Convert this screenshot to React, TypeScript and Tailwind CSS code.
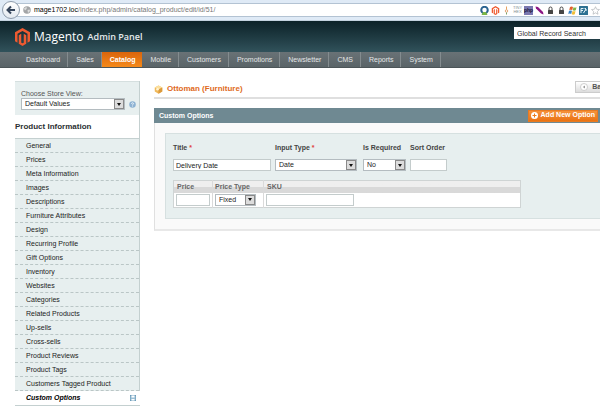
import React from "react";

const NAV_ITEMS = [
    "Dashboard", "Sales", "Catalog", "Mobile", "Customers",
    "Promotions", "Newsletter", "CMS", "Reports", "System"
];

const PRODUCT_TABS = [
    "General", "Prices", "Meta Information", "Images", "Descriptions", "Furniture Attributes",
    "Design", "Recurring Profile", "Gift Options", "Inventory", "Websites", "Categories",
    "Related Products", "Up-sells", "Cross-sells", "Product Reviews", "Product Tags",
    "Customers Tagged Product", "Custom Options"
];

/**
 * The Magento hexagon
 */
const MagentoMark: React.FC<{ className: string }> = ({ className }) => (
    <svg className={className} viewBox="0 0 30 36" fill="#ee5a30" aria-hidden="true">
        <path d="M15 0 30 8.700V26.500L25 29.400V11.600L15 5.800 5 11.600V29.400L0 26.500V8.700z" />
        <path d="M7.500 14.600 12.500 11.700V29.300L15 30.600 17.500 29.300V11.700L22.500 14.600V31.600L15 36 7.500 31.600z" />
    </svg>
);

/**
 * SelectBoxProps
 */
interface SelectBoxProps {
    id: string
    options: string[]
    className: string
    label?: string
}

const SelectBox: React.FC<SelectBoxProps> = ({ id, options, className, label }) => (
    <div className={`relative ${className}`}>
        <select id={id} aria-label={label} className="block w-full h-3 pl-[3px] appearance-none bg-white border border-[#b4bcc0] text-[7px] leading-[10px] text-[#222]">
            {options.map((option) => <option key={option}>{option}</option>)}
        </select>
        <span className="absolute right-px top-px w-[10px] h-[10px] flex items-center justify-center bg-[#dcdcdc] border border-[#8a8a8a] pointer-events-none">
            <svg className="w-1 h-[3px]" viewBox="0 0 4 3"><path d="M0 0h4L2 3z" fill="#111" /></svg>
        </span>
    </div>
);

/**
 * Extension icons at the right end of the address bar
 */
const ToolbarIcons: React.FC = () => (
    <div className="flex items-center gap-[2px] shrink-0">
        <svg className="w-[9px] h-[9px]" viewBox="0 0 18 18">
            <circle cx="9" cy="8" r="6.500" fill="none" stroke="#2a6390" strokeWidth="4" />
            <path d="M3 18 6 12h6l3 6z" fill="#7ab648" />
            <circle cx="9" cy="8.500" r="3" fill="#fff" />
        </svg>
        <MagentoMark className="w-[9px] h-[9px]" />
        <svg className="w-[9px] h-[9px]" viewBox="0 0 18 18">
            <path d="M9 1v6" stroke="#e7a15e" strokeWidth="2" />
            <circle cx="9" cy="10" r="2.500" fill="none" stroke="#d98a4a" strokeWidth="1.500" />
            <path d="M9 13v4" stroke="#7aa36a" strokeWidth="2" />
        </svg>
        <span className="w-[9px] text-center text-[4px] leading-[4px] text-[#858e96]">TINY HEX</span>
        <span className="w-[9px] h-[9px] bg-[#7a78b0] text-center text-[5px] leading-[8px] font-bold text-[#15133a]">php</span>
        <svg className="w-[9px] h-[9px]" viewBox="0 0 18 18">
            <path d="M1 1 6 2 16 12 17 17 12 15 2 5z" fill="#8b1684" />
        </svg>
        {["http", "https"].map((name) => (
            <svg key={name} className="w-[9px] h-[9px]" viewBox="0 0 18 18">
                <path d="M6 9V5a3 3 0 0 1 6 0v4" fill="none" stroke="#454545" strokeWidth="2" />
                <rect x="4" y="8" width="10" height="8" rx="1" fill="#454545" />
            </svg>
        ))}
        <svg className="w-[9px] h-[9px]" viewBox="0 0 18 18">
            <path d="M4 2q3-2 6 0L8.500 8q-3-1.500-6 0z" fill="#e4602b" />
            <path d="M11 2.500q3 1.500 6 0L15.500 8.500q-3 1.500-6 0z" fill="#7fb541" />
            <path d="M2 9.500q3-1.500 6 0L6.500 16q-3-2-6 0z" fill="#3a84c6" />
            <path d="M9 10q3 1.500 6 0L13.500 16.500q-3 1.500-6 0z" fill="#f2bd35" />
        </svg>
        <svg className="w-[9px] h-[9px]" viewBox="0 0 18 18">
            <rect width="18" height="18" rx="1" fill="#2d7192" />
            <path d="M4 14V5h5M4 9h4M9 14l5-8v4M14 5h-3" fill="none" stroke="#e5f2f7" strokeWidth="2" />
        </svg>
        <svg className="ml-px w-[9px] h-[9px]" viewBox="0 0 20 20">
            <path d="m10 1.500 2.600 5.700 6.200.7-4.600 4.200 1.300 6.200L10 15.200l-5.500 3.100 1.300-6.200L1.200 7.900l6.200-.7z" fill="#fff" stroke="#9aa0a6" strokeWidth="1.200" />
        </svg>
    </div>
);

const BrowserBar: React.FC = () => (
    <div className="h-[21px] flex items-center bg-[#dfeaf6] border-b border-[#c3d2de]">
        <button type="button" aria-label="Back" className="z-10 ml-[2px] w-[18px] h-[18px] shrink-0 flex items-center justify-center rounded-full bg-linear-to-b from-white to-[#e3e9f0] border border-[#8d9bab]">
            <svg className="w-[10px] h-[10px]" viewBox="0 0 20 20">
                <path d="M18 10H4M10 3l-7 7 7 7" fill="none" stroke="#36465c" strokeWidth="4" />
            </svg>
        </button>
        <div className="-ml-1 pl-[7px] flex-1 min-w-0 h-[14px] flex items-center bg-white border-y border-[#b3c3d3]">
            <svg className="w-2 h-2 shrink-0" viewBox="0 0 16 16">
                <circle cx="8" cy="8" r="7.500" fill="#a3a5a7" />
                <path d="M2 5q4-4 6-2l-1 3-3 3zM9 8l4-1 1 3-4 4z" fill="#dcdddd" />
            </svg>
            <p className="ml-[3px] flex-1 whitespace-nowrap text-[7px] leading-[10px] text-[#777]">
                <span className="text-black">mage1702.loc</span>/index.php/admin/catalog_product/edit/id/51/
            </p>
            <ToolbarIcons />
        </div>
    </div>
);

const Header: React.FC = () => (
    <header>
        <div className="h-[31px] pl-[15px] flex items-center justify-between bg-linear-to-b from-[#0c2228] to-[#31525b]">
            <div className="flex items-center text-white font-['Open_Sans',sans-serif]">
                <MagentoMark className="w-[15px] h-[18px]" />
                <span className="ml-1 text-[12px] leading-[18px]">Magento</span>
                <span className="ml-1 text-[9px] leading-[18px] font-semibold text-[#e4eaec]">Admin Panel</span>
            </div>
            <input
                type="text"
                aria-label="Global search"
                defaultValue="Global Record Search"
                className="mb-[7px] w-[86px] h-3 pl-[3px] bg-white text-[7px] text-[#333]"
            />
        </div>
        <nav className="h-4 pl-[18px] flex bg-linear-to-b from-[#697276] to-[#5a6468] border-b border-[#4c5558]">
            {NAV_ITEMS.map((item) => (
                <a
                    key={item}
                    href="#"
                    className={item === "Catalog"
                        ? "pl-2 pr-[7px] bg-linear-to-b from-[#d9640c] to-[#f58a1a] text-[7px] leading-[15px] font-bold text-white"
                        : "pl-2 pr-[7px] border-r border-[#848c8f] text-[7px] leading-[15px] text-[#e3e6e7]"}
                >
                    {item}
                </a>
            ))}
        </nav>
    </header>
);

const Sidebar: React.FC = () => (
    <aside className="w-[125px] shrink-0 border-r border-[#c4d0d0]">
        <div className="h-[34px] pl-[6px] pt-[7px] bg-[#e7efef] border-t border-[#d5dfdf]">
            <label htmlFor="store" className="block text-[7px] leading-[9px] text-[#555]">Choose Store View:</label>
            <div className="flex items-center gap-1">
                <SelectBox id="store" options={["Default Values"]} className="w-[104px]" />
                <svg className="w-[7px] h-[7px]" viewBox="0 0 14 14">
                    <circle cx="7" cy="7" r="6.500" fill="#8db2d3" />
                    <path d="M5 5.500q0-2 2-2t2 2q0 1-2 2v1M7 9.500v1.500" fill="none" stroke="#fff" strokeWidth="1.500" />
                </svg>
            </div>
        </div>
        <h3 className="h-[23px] pt-[3px] text-[8px] leading-[18px] font-bold text-[#2b3032]">Product Information</h3>
        <ul className="border-t border-[#c4d0d0]">
            {PRODUCT_TABS.map((tab) => (
                <li key={tab}>
                    {tab === "Custom Options" ? (
                        <a href="#" className="h-[15px] pl-[11px] pr-1 -mr-px flex items-center justify-between bg-white border-b border-[#c4d0d0] text-[7px] leading-[14px] font-bold italic text-black">
                            {tab}
                            <svg className="w-[6px] h-[6px]" viewBox="0 0 12 12">
                                <rect x=".5" y=".5" width="11" height="11" fill="#9dc0d6" stroke="#4d87ab" />
                                <path d="M3 1h6v4H3zM3 8h6v3H3z" fill="#fff" />
                            </svg>
                        </a>
                    ) : (
                        <a href="#" className="block h-[14px] pl-[11px] bg-[#e7efef] border-b border-dashed border-[#bac6c6] text-[7px] leading-[14px] text-[#222]">
                            {tab}
                        </a>
                    )}
                </li>
            ))}
        </ul>
    </aside>
);

const Required: React.FC = () => <span className="text-[#e04040]"> *</span>;

const OptionForm: React.FC = () => (
    <div className="ml-[10px] h-[86px] pl-[7px] pt-[9px] bg-[#e7efef] border-y border-l border-[#d6e0e0]">
        <div className="flex items-start gap-1 text-[7px] font-bold text-[#444]">
            <div className="w-[98px]">
                <label htmlFor="title" className="block mb-[6px] leading-[10px]">Title<Required /></label>
                <input id="title" type="text" defaultValue="Delivery Date" className="block w-full h-3 pl-[2px] bg-white border border-[#c4cccc] font-normal text-[#222]" />
            </div>
            <div className="w-[82px]">
                <label htmlFor="type" className="block mb-[6px] leading-[10px]">Input Type<Required /></label>
                <SelectBox id="type" options={["Date", "Field", "Drop-down"]} className="w-full font-normal" />
            </div>
            <div className="ml-[2px] w-[43px] whitespace-nowrap">
                <label htmlFor="required" className="block mb-[6px] leading-[10px]">Is Required</label>
                <SelectBox id="required" options={["No", "Yes"]} className="w-full font-normal" />
            </div>
            <div className="w-[37px] whitespace-nowrap">
                <label htmlFor="sort" className="block mb-[6px] leading-[10px]">Sort Order</label>
                <input id="sort" type="text" className="block w-full h-3 bg-white border border-[#c4cccc]" />
            </div>
        </div>

        <table className="mt-[9px] w-[348px] table-fixed border-collapse border border-[#cfd4d4] bg-white text-[7px]">
            <thead>
                <tr className="h-3 bg-linear-to-b from-[#efefef] from-50% to-[#d9d9d9] to-50% text-left text-[#666]">
                    <th id="price" className="w-[39px] p-0 pl-[3px] leading-[11px] border-r border-[#dadada]">Price</th>
                    <th id="price-type" className="w-[51px] p-0 pl-[2px] leading-[11px] border-r border-[#dadada]">Price Type</th>
                    <th id="sku" className="p-0 pl-[3px] leading-[11px]">SKU</th>
                </tr>
            </thead>
            <tbody>
                <tr className="h-[15px]">
                    <td className="p-0 pl-[2px] border-r border-[#dadada]">
                        <input type="text" aria-labelledby="price" className="block w-[34px] h-3 border border-[#c4cccc]" />
                    </td>
                    <td className="p-0 pl-[2px] border-r border-[#dadada]">
                        <SelectBox id="price-kind" label="Price Type" options={["Fixed", "Percent"]} className="w-[41px]" />
                    </td>
                    <td className="p-0 pl-[2px]">
                        <input type="text" aria-labelledby="sku" className="block w-[88px] h-3 border border-[#c4cccc]" />
                    </td>
                </tr>
            </tbody>
        </table>
    </div>
);

const App: React.FC = () => {
    return (
        <div className="overflow-hidden bg-white font-['Liberation_Sans',Arial,sans-serif]">
            <BrowserBar />
            <Header />

            <div className="pt-[13px] pl-[15px] flex items-start gap-[14px]">
                <Sidebar />
                <main className="flex-1 min-w-0">
                    {/* Product title */}
                    <div className="h-[18px] flex justify-between items-start border-b-2 border-[#dfdfdf]">
                        <h1 className="pt-[2px] flex items-center gap-1 text-[8px] leading-[12px] font-bold text-[#e06a1c]">
                            <svg className="w-[9px] h-[9px]" viewBox="0 0 18 18">
                                <path d="m9 1 7.500 4v8L9 17.500 1.500 13V5z" fill="#f0b95a" />
                                <path d="m9 1 7.500 4L9 9 1.500 5z" fill="#fbe0a0" />
                                <path d="m9 9 7.500-4v8L9 17.500z" fill="#dc9a3c" />
                                <circle cx="7" cy="8.500" r="2.500" fill="#fff4d4" />
                            </svg>
                            Ottoman (Furniture)
                        </h1>
                        <button type="button" className="-mr-[14px] h-3 px-1 flex items-center gap-1 bg-linear-to-b from-white to-[#dcdcdc] border border-[#ccc] text-[7px] font-bold text-[#555]">
                            <svg className="w-2 h-2" viewBox="0 0 16 16">
                                <circle cx="8" cy="8" r="7" fill="#fff" stroke="#c0c0c0" strokeWidth="1.500" />
                                <path d="M10 5v6L5.500 8z" fill="#999" />
                            </svg>
                            Back
                        </button>
                    </div>

                    {/* Custom options */}
                    <div className="mt-[9px] h-[15px] pl-[5px] pr-[2px] flex items-center justify-between bg-[#6f8992]">
                        <h2 className="text-[7px] leading-[13px] font-bold text-white">Custom Options</h2>
                        <button type="button" className="h-3 px-[2px] flex items-center gap-[3px] bg-linear-to-b from-[#f5923a] to-[#ea7210] border border-[#e87a22] text-[7px] font-bold text-white whitespace-nowrap">
                            <svg className="w-[7px] h-[7px]" viewBox="0 0 14 14">
                                <circle cx="7" cy="7" r="7" fill="#fff" />
                                <path d="M7 3v8M3 7h8" stroke="#ee7a1a" strokeWidth="2" />
                            </svg>
                            Add New Option
                        </button>
                    </div>
                    <div className="py-[10px] bg-[#fafafa] border-l border-b-2 border-b-[#e8e8e8] border-l-[#e0e0e0]">
                        <OptionForm />
                    </div>
                </main>
            </div>
        </div>
    );
};

export default App;
